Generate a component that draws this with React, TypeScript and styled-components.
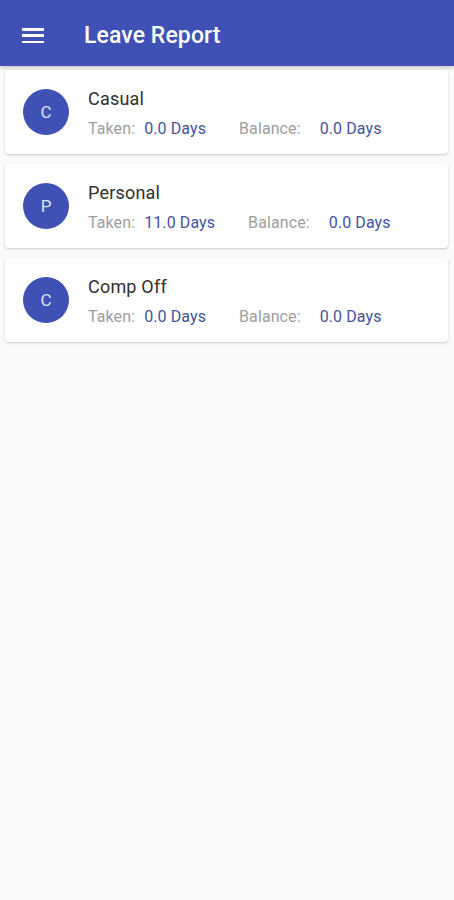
import React from 'react';
import styled, { createGlobalStyle } from 'styled-components';

const GlobalStyle = createGlobalStyle`
    html, body {
        margin: 0;
        padding: 0;
        background: #fafafa;
        font-family: Roboto, "Liberation Sans", sans-serif;
    }
`;

// STYLE
const Page = styled.div`
    width: 454px;
    min-height: 900px;
    background: #fafafa;
`;

const AppBar = styled.header`
    height: 66px;
    background: #3f51b5;
    display: flex;
    align-items: center;
    padding: 5px 0 0 22px;
    box-shadow: 0 2px 4px rgba(0, 0, 0, 0.2);
    box-sizing: border-box;
`;

const MenuButton = styled.div`
    width: 22px;
    height: 15px;
    display: flex;
    flex-direction: column;
    justify-content: space-between;
    margin-right: 40px;

    span {
        display: block;
        height: 2.5px;
        background: #fff;
    }
`;

const Title = styled.h1`
    margin: 0;
    color: #fff;
    font-size: 23px;
    font-weight: 500;
    letter-spacing: 0.1px;
`;

const List = styled.div`
    display: flex;
    flex-direction: column;
    gap: 10px;
    padding: 4px 6px 0 5px;
`;

const Card = styled.div`
    height: 84px;
    background: #fff;
    border-radius: 4px;
    box-shadow: 0 1px 3px rgba(0, 0, 0, 0.14), 0 1px 1px rgba(0, 0, 0, 0.06);
    display: flex;
    align-items: center;
    padding-left: 18px;
`;

const Avatar = styled.div`
    width: 46px;
    height: 46px;
    border-radius: 50%;
    background: #3f51b5;
    color: #dfe3f5;
    font-size: 17px;
    display: flex;
    align-items: center;
    justify-content: center;
    margin-right: 19px;
`;

const Info = styled.div`
    display: flex;
    flex-direction: column;
    gap: 10px;
    margin-top: 1px;
`;

const Name = styled.div`
    font-size: 18px;
    color: #303030;
    letter-spacing: 0.2px;
`;

const Stats = styled.div`
    display: flex;
    align-items: baseline;
    font-size: 16px;
    letter-spacing: 0.1px;
`;

const Label = styled.span<{ $gap: number }>`
    color: #9e9e9e;
    margin-right: ${(p) => p.$gap}px;
`;

const Value = styled.span`
    color: #45539e;
    margin-right: 33px;
`;

const leaves = [
    { letter: 'C', name: 'Casual', taken: '0.0 Days', balance: '0.0 Days' },
    { letter: 'P', name: 'Personal', taken: '11.0 Days', balance: '0.0 Days' },
    { letter: 'C', name: 'Comp Off', taken: '0.0 Days', balance: '0.0 Days' },
];

const App: React.FC = () => {
    return (
        <Page>
            <GlobalStyle />
            {/* SECTION :: HEADER */}
            <AppBar>
                <MenuButton>
                    <span />
                    <span />
                    <span />
                </MenuButton>
                <Title>Leave Report</Title>
            </AppBar>

            {/* SECTION :: LIST */}
            <List>
                {leaves.map((l) => (
                    <Card key={l.name}>
                        <Avatar>{l.letter}</Avatar>
                        <Info>
                            <Name>{l.name}</Name>
                            <Stats>
                                <Label $gap={9}>Taken:</Label>
                                <Value>{l.taken}</Value>
                                <Label $gap={19}>Balance:</Label>
                                <Value>{l.balance}</Value>
                            </Stats>
                        </Info>
                    </Card>
                ))}
            </List>
        </Page>
    );
};
export default App;
